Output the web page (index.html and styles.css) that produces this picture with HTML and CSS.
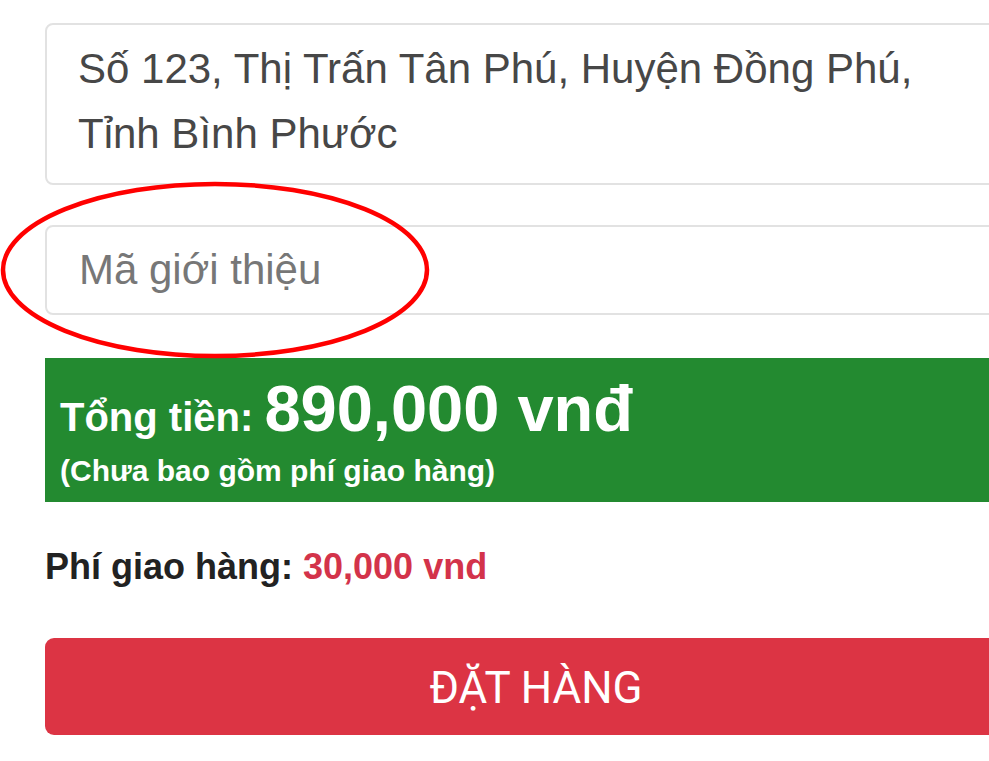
FILE: index.html
```html
<!DOCTYPE html>
<html lang="vi">
<head>
<meta charset="utf-8">
<title>Đặt hàng</title>
<link rel="stylesheet" href="styles.css">
</head>
<body>
<div class="page">
  <form class="form">
    <div class="field field-area">Số 123, Thị Trấn Tân Phú, Huyện Đồng Phú, Tỉnh Bình Phước</div>
    <div class="field field-input"><span class="placeholder">Mã giới thiệu</span></div>
    <div class="total">
      <div class="total-line"><span class="total-label">Tổng tiền:</span> <span class="total-amount">890,000 vnđ</span></div>
      <div class="total-note">(Chưa bao gồm phí giao hàng)</div>
    </div>
    <div class="shipping"><span class="shipping-label">Phí giao hàng:</span> <span class="shipping-fee">30,000 vnd</span></div>
    <button type="button" class="order-btn">ĐẶT HÀNG</button>
  </form>
  <svg class="highlight" width="440" height="184" viewBox="0 0 440 184" aria-hidden="true">
    <ellipse cx="215" cy="89" rx="212" ry="86" fill="none" stroke="#ff0000" stroke-width="4.5"/>
  </svg>
</div>
</body>
</html>
```

FILE: styles.css
```css
html, body {
  margin: 0;
  padding: 0;
  background: #ffffff;
  overflow: hidden;
}

body {
  width: 989px;
  height: 761px;
  font-family: "Liberation Sans", Arial, sans-serif;
}

.page {
  position: relative;
  width: 989px;
  height: 761px;
  overflow: hidden;
}

.form {
  display: flex;
  flex-direction: column;
  width: 982px;
  margin: 0 0 0 45px;
  padding-top: 23px;
}

.field {
  box-sizing: border-box;
  border: 2px solid #e2e2e2;
  border-radius: 8px;
  background: #fff;
  font-size: 42px;
  color: #474747;
}

.field-area {
  height: 162px;
  padding: 11px 50px 0 31px;
  line-height: 65px;
}

.field-input {
  height: 90px;
  margin-top: 40px;
  padding: 0 30px 0 32px;
  display: flex;
  align-items: center;
}

.placeholder {
  color: #777777;
  line-height: 1;
}

.total {
  box-sizing: border-box;
  height: 144px;
  margin-top: 43px;
  background: #238a30;
  color: #fff;
  font-weight: 700;
  padding: 16px 15px 0 15px;
}

.total-line {
  font-size: 40px;
  line-height: 70px;
  white-space: nowrap;
}

.total-amount {
  font-size: 65px;
}

.total-note {
  font-size: 30px;
  line-height: 37px;
  white-space: nowrap;
}

.shipping {
  margin-top: 45px;
  font-size: 36px;
  font-weight: 700;
  line-height: 40px;
  color: #222;
}

.shipping-fee {
  color: #d3334a;
}

.order-btn {
  margin-top: 51px;
  height: 97px;
  width: 100%;
  border: 0;
  border-radius: 9px;
  background: #dc3444;
  color: #fff;
  font-family: Roboto, "Liberation Sans", Arial, sans-serif;
  font-size: 44px;
  font-weight: 400;
  padding: 3px 0 0 0;
}

.highlight {
  position: absolute;
  left: 0;
  top: 181px;
}
```
